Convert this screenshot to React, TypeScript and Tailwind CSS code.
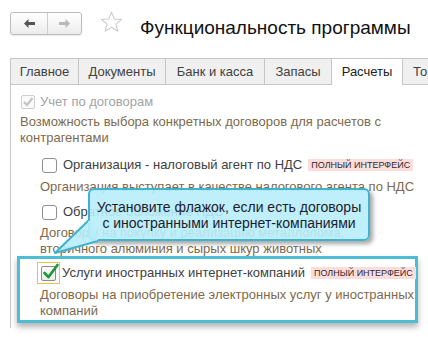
import React from "react";

const font = { fontFamily: '"Liberation Sans", Arial, sans-serif' };

function Arrow({ dir, color }: { dir: "left" | "right"; color: string }) {
  return (
    <svg width="11" height="9" viewBox="0 0 11 9" className={dir === "right" ? "scale-x-[-1]" : ""}>
      <path d="M0 4.5 L4.5 0 V3 H11 V6 H4.5 V9 Z" fill={color} />
    </svg>
  );
}

function Star() {
  return (
    <svg width="23" height="22" viewBox="0 0 24 23">
      <path
        d="M12 1.2 L14.9 8.3 L22.6 8.8 L16.7 13.7 L18.6 21.2 L12 17.1 L5.4 21.2 L7.3 13.7 L1.4 8.8 L9.1 8.3 Z"
        fill="none"
        stroke="#c9c9c9"
        strokeWidth="1.1"
        strokeLinejoin="round"
      />
    </svg>
  );
}

function Checkbox({ state }: { state: "off" | "disabled" | "on" }) {
  if (state === "disabled") {
    return (
      <div className="w-[14px] h-[14px] border border-[#cfcfcf] rounded-[2px] bg-[#fafafa] relative shrink-0">
        <svg width="14" height="14" viewBox="0 0 14 14" className="absolute left-[-1px] top-[-1px]">
          <path d="M3 7 L6 10 L11.5 3" fill="none" stroke="#c4c4c4" strokeWidth="2.2" />
        </svg>
      </div>
    );
  }
  if (state === "on") {
    return (
      <div className="w-[23px] h-[22px] border border-[#f0c24a] flex items-center justify-center shrink-0">
        <div className="w-[15px] h-[15px] border border-[#8c8c8c] rounded-[2px] bg-gradient-to-b from-white to-[#ececec] relative">
          <svg width="18" height="19" viewBox="0 0 18 19" className="absolute left-[0px] top-[-5px]">
            <path d="M2.5 11 L6.5 15 L15.5 3" fill="none" stroke="#1f9a3a" strokeWidth="2.8" strokeLinecap="round" strokeLinejoin="round" />
          </svg>
        </div>
      </div>
    );
  }
  return <div className="w-[15px] h-[15px] border border-[#8f8f8f] rounded-[3px] bg-white shrink-0" />;
}

function Badge() {
  return (
    <span className="ml-[6px] px-[3px] bg-[#fddcdc] text-[#2c2c2c] text-[9px] leading-[12px] whitespace-nowrap">
      ПОЛНЫЙ ИНТЕРФЕЙС
    </span>
  );
}

const tabs = [
  { label: "Главное", w: "w-[68px]" },
  { label: "Документы", w: "w-[87px]" },
  { label: "Банк и касса", w: "w-[99px]" },
  { label: "Запасы", w: "w-[67px]" },
  { label: "Расчеты", w: "w-[71px]", active: true },
  { label: "Торговля", w: "w-[60px]" },
];

export default function App() {
  return (
    <div className="relative w-[428px] h-[337px] overflow-hidden bg-white text-[13px]" style={font}>
      {/* header */}
      <div className="h-[58px] flex items-start pt-[12px] pl-[10px]">
        <div className="flex h-[23px] w-[72px] rounded-[3px] border border-[#bdbdbd] bg-gradient-to-b from-white to-[#ececec] shadow-[0_1px_1px_rgba(0,0,0,0.08)]">
          <div className="w-[37px] flex items-center justify-center border-r border-[#cdcdcd]">
            <Arrow dir="left" color="#555555" />
          </div>
          <div className="flex-1 flex items-center justify-center">
            <Arrow dir="right" color="#b9b9b9" />
          </div>
        </div>
        <div className="ml-[18px] mt-[-1px]">
          <Star />
        </div>
        <div className="ml-[17px] mt-[4px] text-[19px] leading-[24px] text-[#111] whitespace-nowrap">Функциональность программы</div>
      </div>

      {/* tabs */}
      <div className="flex pl-[10px] h-[27px]">
        {tabs.map((t, i) => (
          <div
            key={t.label}
            className={
              "shrink-0 h-[27px] border-t border-l border-[#c6c6c6] flex items-center overflow-hidden whitespace-nowrap " +
              t.w +
              (i === tabs.length - 1 ? " pl-[10px]" : " justify-center") +
              (t.active ? " bg-white text-[#222]" : " bg-[#f0f0f0] border-b text-[#404040]")
            }
          >
            {t.label}
          </div>
        ))}
      </div>

      {/* panel */}
      <div className="ml-[10px] border-l border-[#c6c6c6] h-[243px] pt-[9px] text-[#404040]">
        <div className="flex items-center h-[16px] pl-[10px]">
          <Checkbox state="disabled" />
          <span className="ml-[5px] text-[#a3a3a3]">Учет по договорам</span>
        </div>
        <div className="mt-[4px] pl-[9px] pr-[30px] leading-[16px] text-[#7d6a4c]">
          Возможность выбора конкретных договоров для расчетов с контрагентами
        </div>

        <div className="mt-[11px] flex items-center h-[16px] pl-[31px] whitespace-nowrap">
          <Checkbox state="off" />
          <span className="ml-[6px]">Организация - налоговый агент по НДС</span>
          <Badge />
        </div>
        <div className="mt-[6px] pl-[29px] leading-[16px] text-[#7d6a4c] whitespace-nowrap">
          Организация выступает в качестве налогового агента по НДС
        </div>

        <div className="mt-[9px] flex items-center h-[16px] pl-[31px] whitespace-nowrap">
          <Checkbox state="off" />
          <span className="ml-[6px]">Обратное обложение НДС</span>
        </div>
        <div className="mt-[5px] pl-[29px] pr-[30px] leading-[16px] text-[#7d6a4c]">
          Договоры на покупку и реализацию металлолома, вторичного алюминия и сырых шкур животных
        </div>

        <div className="mt-[-1px] ml-[6px] w-[401px] border-[3px] border-[#4bbdd5] bg-white shadow-[0_4px_6px_rgba(0,0,0,0.3)] pt-[3px] pb-[1px]">
          <div className="flex items-center h-[22px] pl-[17px] whitespace-nowrap">
            <Checkbox state="on" />
            <span className="ml-[2px]">Услуги иностранных интернет-компаний</span>
            <Badge />
          </div>
          <div className="mt-[3px] pl-[20px] leading-[16px] text-[#7d6a4c]">
            <div className="whitespace-nowrap">Договоры на приобретение электронных услуг у иностранных</div>
            <div>компаний</div>
          </div>
        </div>
      </div>

      {/* callout */}
      <div className="absolute left-[88px] top-[188px] w-[282px] h-[53px] rounded-[6px] border-2 border-[#3fb2ce] bg-[rgba(184,237,250,0.9)] shadow-[3px_3px_4px_rgba(0,0,0,0.35)] flex flex-col items-center justify-center text-[14px] leading-[16px] text-[#1c1c2e]">
        <div>Установите флажок, если есть договоры</div>
        <div>с иностранными интернет-компаниями</div>
      </div>
      <svg className="absolute left-[50px] top-[215px]" width="52" height="45" viewBox="0 0 52 45">
        <path d="M39 5 L5 38 L48 26" fill="rgba(184,237,250,0.9)" stroke="#3fb2ce" strokeWidth="2" strokeLinejoin="round" />
        <path d="M39 6 L47 25" stroke="rgba(184,237,250,1)" strokeWidth="3" />
      </svg>
    </div>
  );
}
